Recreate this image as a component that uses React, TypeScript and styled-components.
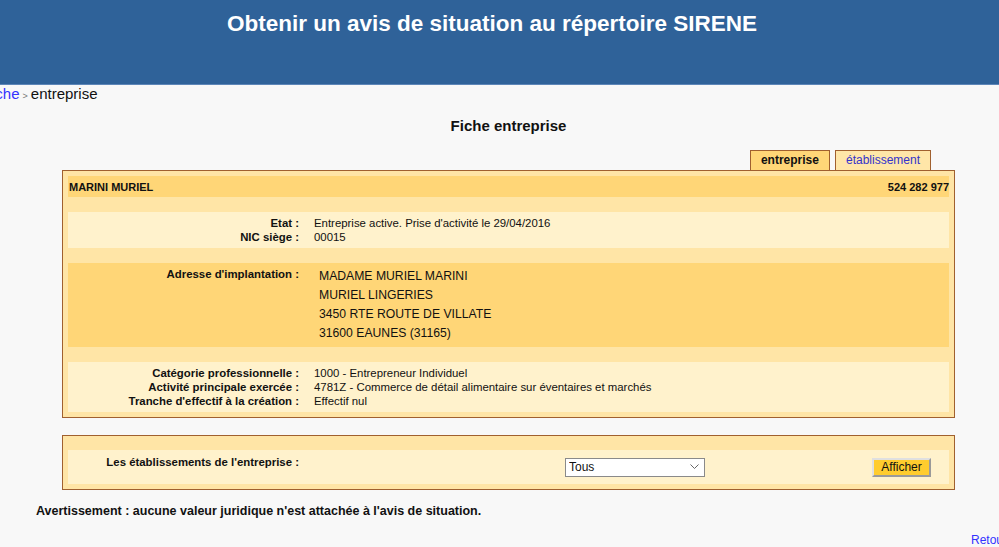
import React from "react";
import styled, { createGlobalStyle } from "styled-components";

const GlobalStyle = createGlobalStyle`
  body {
    margin: 0;
    background: #f8f8f8;
    font-family: "Liberation Sans", Arial, sans-serif;
    color: #111;
    overflow: hidden;
  }
`;

const Banner = styled.header`
  height: 84px;
  background: #2f6299;
  border-bottom: 1px solid #5d86b8;

  h1 {
    margin: 0;
    padding: 10px 15px 0 0;
    text-align: center;
    color: #fff;
    font-size: 22.5px;
    line-height: 27px;
    font-weight: bold;
  }
`;

const Crumbs = styled.nav`
  margin-left: -53px;
  font-size: 15px;
  line-height: 18px;
  white-space: nowrap;

  a {
    color: #3333ff;
    text-decoration: none;
  }
`;

const Sep = styled.span`
  color: #777;
  font-size: 9px;
  margin: 0 3px;
`;

const Main = styled.main`
  margin: 0 44px 0 62px;
`;

const PageTitle = styled.h2`
  margin: 12px 0 15px;
  text-align: center;
  font-size: 15px;
  line-height: 18px;
  font-weight: bold;
`;

const TabBar = styled.div`
  display: flex;
  justify-content: flex-end;
  gap: 5px;
  padding-right: 24px;
  margin-bottom: -1px;
  position: relative;
  z-index: 1;
`;

const Tab = styled.a<{ $active?: boolean }>`
  box-sizing: border-box;
  height: 21px;
  padding: 0 10px;
  border: 1px solid #a0602f;
  background: ${(p) => (p.$active ? "#ffd677" : "#ffe6a8")};
  color: ${(p) => (p.$active ? "#111" : "#3333cc")};
  font-size: 12px;
  font-weight: ${(p) => (p.$active ? "bold" : "normal")};
  line-height: 19px;
  text-decoration: none;
`;

const Panel = styled.section<{ $top?: number }>`
  display: flex;
  flex-direction: column;
  gap: 15px;
  margin-top: ${(p) => p.$top ?? 0}px;
  padding: ${(p) => (p.$top ? "14px 5px 5px" : "5px")};
  border: 1px solid #a0602f;
  background: #ffe5a6;
`;

const HeaderBand = styled.div`
  height: 21px;
  display: flex;
  align-items: center;
  justify-content: space-between;
  padding-left: 1px;
  background: #ffd677;
  font-size: 11px;
  line-height: 14px;
  font-weight: bold;
`;

const Block = styled.div<{ $tone: "light" | "dark" }>`
  padding: 4px 0;
  background: ${(p) => (p.$tone === "light" ? "#fff2cc" : "#ffd677")};
`;

const Row = styled.div`
  display: grid;
  grid-template-columns: 231px 1fr;
  column-gap: 15px;
  font-size: 11.4px;
  line-height: 14px;
`;

const Label = styled.div`
  text-align: right;
  font-weight: bold;
`;

const Address = styled.div`
  padding-left: 5px;
  font-size: 12.2px;
  line-height: 19px;
`;

const ListRow = styled.div`
  height: 34px;
  display: flex;
  align-items: center;
  background: #fff2cc;
  font-size: 11.4px;
  line-height: 14px;

  ${Label} {
    width: 231px;
    align-self: flex-start;
    padding-top: 5px;
  }
`;

const SelectWrap = styled.div`
  position: relative;
  margin-left: 266px;
  width: 140px;
  height: 19px;

  svg {
    position: absolute;
    right: 6px;
    top: 6px;
    pointer-events: none;
  }
`;

const Select = styled.select`
  appearance: none;
  box-sizing: border-box;
  width: 100%;
  height: 100%;
  padding: 0 3px;
  border: 1px solid #8a8a8a;
  background: #fff;
  font-family: "Liberation Sans", Arial, sans-serif;
  font-size: 12px;
  color: #111;
`;

const Button = styled.button`
  box-sizing: border-box;
  margin-left: auto;
  margin-right: 18px;
  width: 59px;
  height: 19px;
  padding: 0;
  border: 2px solid;
  border-color: #e0e0e0 #9a9a9a #9a9a9a #e0e0e0;
  background: #ffcc2e;
  font-family: "Liberation Sans", Arial, sans-serif;
  font-size: 12px;
  color: #111;
`;

const Notice = styled.p`
  margin: 14px 0 0 36px;
  font-size: 12.5px;
  line-height: 14px;
  font-weight: bold;
`;

const Footer = styled.div`
  display: flex;
  justify-content: flex-end;
  margin: 15px -8px 0 0;
  font-size: 12px;
  line-height: 14px;

  a {
    color: #3333ff;
    text-decoration: none;
  }
`;

const company = {
  name: "MARINI MURIEL",
  siren: "524 282 977",
  address: ["MADAME MURIEL MARINI", "MURIEL LINGERIES", "3450 RTE ROUTE DE VILLATE", "31600 EAUNES (31165)"],
};

export default function App() {
  return (
    <>
      <GlobalStyle />
      <Banner>
        <h1>Obtenir un avis de situation au répertoire SIRENE</h1>
      </Banner>
      <Crumbs>
        <a href="#">Recherche</a>
        <Sep>&gt;</Sep>
        entreprise
      </Crumbs>
      <Main>
        <PageTitle>Fiche entreprise</PageTitle>
        <TabBar>
          <Tab $active>entreprise</Tab>
          <Tab href="#">établissement</Tab>
        </TabBar>
        <Panel>
          <HeaderBand>
            <span>{company.name}</span>
            <span>{company.siren}</span>
          </HeaderBand>
          <Block $tone="light">
            <Row>
              <Label>Etat :</Label>
              <div>Entreprise active. Prise d'activité le 29/04/2016</div>
            </Row>
            <Row>
              <Label>NIC siège :</Label>
              <div>00015</div>
            </Row>
          </Block>
          <Block $tone="dark">
            <Row>
              <Label>Adresse d'implantation :</Label>
              <Address>
                {company.address.map((line) => (
                  <div key={line}>{line}</div>
                ))}
              </Address>
            </Row>
          </Block>
          <Block $tone="light">
            <Row>
              <Label>Catégorie professionnelle :</Label>
              <div>1000 - Entrepreneur Individuel</div>
            </Row>
            <Row>
              <Label>Activité principale exercée :</Label>
              <div>4781Z - Commerce de détail alimentaire sur éventaires et marchés</div>
            </Row>
            <Row>
              <Label>Tranche d'effectif à la création :</Label>
              <div>Effectif nul</div>
            </Row>
          </Block>
        </Panel>
        <Panel $top={17}>
          <ListRow>
            <Label>Les établissements de l'entreprise :</Label>
            <SelectWrap>
              <Select defaultValue="tous">
                <option value="tous">Tous</option>
              </Select>
              <svg width="9" height="6" viewBox="0 0 9 6">
                <path d="M0.5 0.5 L4.5 4.5 L8.5 0.5" fill="none" stroke="#666" strokeWidth="1" />
              </svg>
            </SelectWrap>
            <Button>Afficher</Button>
          </ListRow>
        </Panel>
      </Main>
      <Notice>Avertissement : aucune valeur juridique n'est attachée à l'avis de situation.</Notice>
      <Footer>
        <a href="#">Retour</a>
      </Footer>
    </>
  );
}
